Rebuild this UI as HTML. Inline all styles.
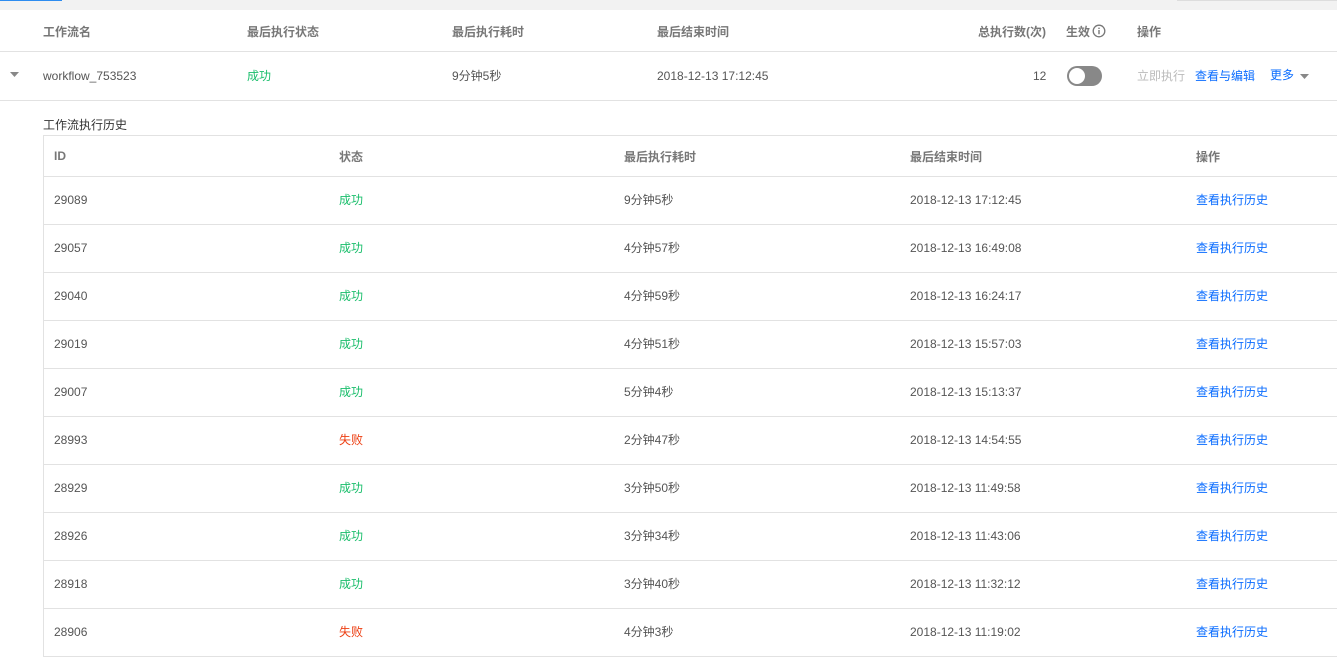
<!DOCTYPE html><html><head><meta charset="utf-8"><style>
*{margin:0;padding:0;box-sizing:border-box}
body{width:1337px;height:669px;background:#fff;font-family:"Liberation Sans","Noto Sans CJK SC",sans-serif;font-size:12px;color:#555;position:relative;overflow:hidden}
.a{position:absolute;white-space:nowrap}
.h{color:#777;font-weight:bold}
.g{color:#19be6b}.r{color:#ed4014}.b{color:#0a6cff}
.c{margin-top:-2px}
.line{position:absolute;height:1px;background:#e2e2e2}
</style></head><body>
<div class="a" style="left:0;top:0;width:1337px;height:10px;background:#f2f2f2"></div>
<div class="a" style="left:0;top:0;width:62px;height:1px;background:#2d8cf0"></div>
<div class="a" style="left:1177px;top:0;width:160px;height:1px;background:#ddd"></div>
<div class="a h" style="left:43px;top:23px">工作流名</div>
<div class="a h" style="left:247px;top:23px">最后执行状态</div>
<div class="a h" style="left:452px;top:23px">最后执行耗时</div>
<div class="a h" style="left:657px;top:23px">最后结束时间</div>
<div class="a h" style="left:978px;top:23px">总执行数(次)</div>
<div class="a h" style="left:1066px;top:23px">生效</div>
<svg class="a" style="left:1092px;top:24px" width="14" height="14" viewBox="0 0 14 14"><circle cx="7" cy="7" r="5.8" fill="none" stroke="#777" stroke-width="1.3"/><rect x="6.3" y="6" width="1.4" height="4.2" fill="#777"/><rect x="6.3" y="3.6" width="1.4" height="1.4" fill="#777"/></svg>
<div class="a h" style="left:1137px;top:23px">操作</div>
<div class="line" style="left:0;top:51px;width:1337px"></div>
<svg class="a" style="left:10px;top:72px" width="9" height="6"><path d="M0 0H9L4.5 5Z" fill="#888"/></svg>
<div class="a" style="left:43px;top:69px">workflow_753523</div>
<div class="a g" style="left:247px;top:67px">成功</div>
<div class="a" style="left:452px;top:67px">9分钟5秒</div>
<div class="a" style="left:657px;top:69px">2018-12-13 17:12:45</div>
<div class="a" style="left:1033px;top:69px">12</div>
<div class="a" style="left:1067px;top:66px;width:35px;height:20px;border-radius:10px;background:#888"></div>
<div class="a" style="left:1069px;top:68px;width:16px;height:16px;border-radius:50%;background:#fff"></div>
<div class="a" style="left:1137px;top:67px;color:#bbb">立即执行</div>
<div class="a b" style="left:1195px;top:67px">查看与编辑</div>
<div class="a b" style="left:1270px;top:66px">更多</div>
<svg class="a" style="left:1300px;top:74px" width="9" height="6"><path d="M0 0H9L4.5 5Z" fill="#888"/></svg>
<div class="line" style="left:0;top:100px;width:1337px"></div>
<div class="a" style="left:43px;top:116px;color:#333">工作流执行历史</div>
<div class="line" style="left:43px;top:135px;width:1294px"></div>
<div class="a" style="left:43px;top:135px;width:1px;height:522px;background:#e2e2e2"></div>
<div class="a h" style="left:54px;top:149px">ID</div>
<div class="a h" style="left:339px;top:148px">状态</div>
<div class="a h" style="left:624px;top:148px">最后执行耗时</div>
<div class="a h" style="left:910px;top:148px">最后结束时间</div>
<div class="a h" style="left:1196px;top:148px">操作</div>
<div class="line" style="left:43px;top:176px;width:1294px"></div>
<div id="rows"></div>
<script>
var d=[["29089","成功","9分钟5秒","2018-12-13 17:12:45"],["29057","成功","4分钟57秒","2018-12-13 16:49:08"],["29040","成功","4分钟59秒","2018-12-13 16:24:17"],["29019","成功","4分钟51秒","2018-12-13 15:57:03"],["29007","成功","5分钟4秒","2018-12-13 15:13:37"],["28993","失败","2分钟47秒","2018-12-13 14:54:55"],["28929","成功","3分钟50秒","2018-12-13 11:49:58"],["28926","成功","3分钟34秒","2018-12-13 11:43:06"],["28918","成功","3分钟40秒","2018-12-13 11:32:12"],["28906","失败","4分钟3秒","2018-12-13 11:19:02"]];
var h="";d.forEach(function(r,i){var t=193+i*48;h+='<div class="a" style="left:54px;top:'+t+'px">'+r[0]+'</div><div class="a c '+(r[1]=="成功"?"g":"r")+'" style="left:339px;top:'+t+'px">'+r[1]+'</div><div class="a c" style="left:624px;top:'+t+'px">'+r[2]+'</div><div class="a" style="left:910px;top:'+t+'px">'+r[3]+'</div><div class="a b c" style="left:1196px;top:'+t+'px">查看执行历史</div><div class="line" style="left:43px;top:'+(224+i*48)+'px;width:1294px"></div>';});
document.getElementById("rows").innerHTML=h;
</script>
</body></html>
